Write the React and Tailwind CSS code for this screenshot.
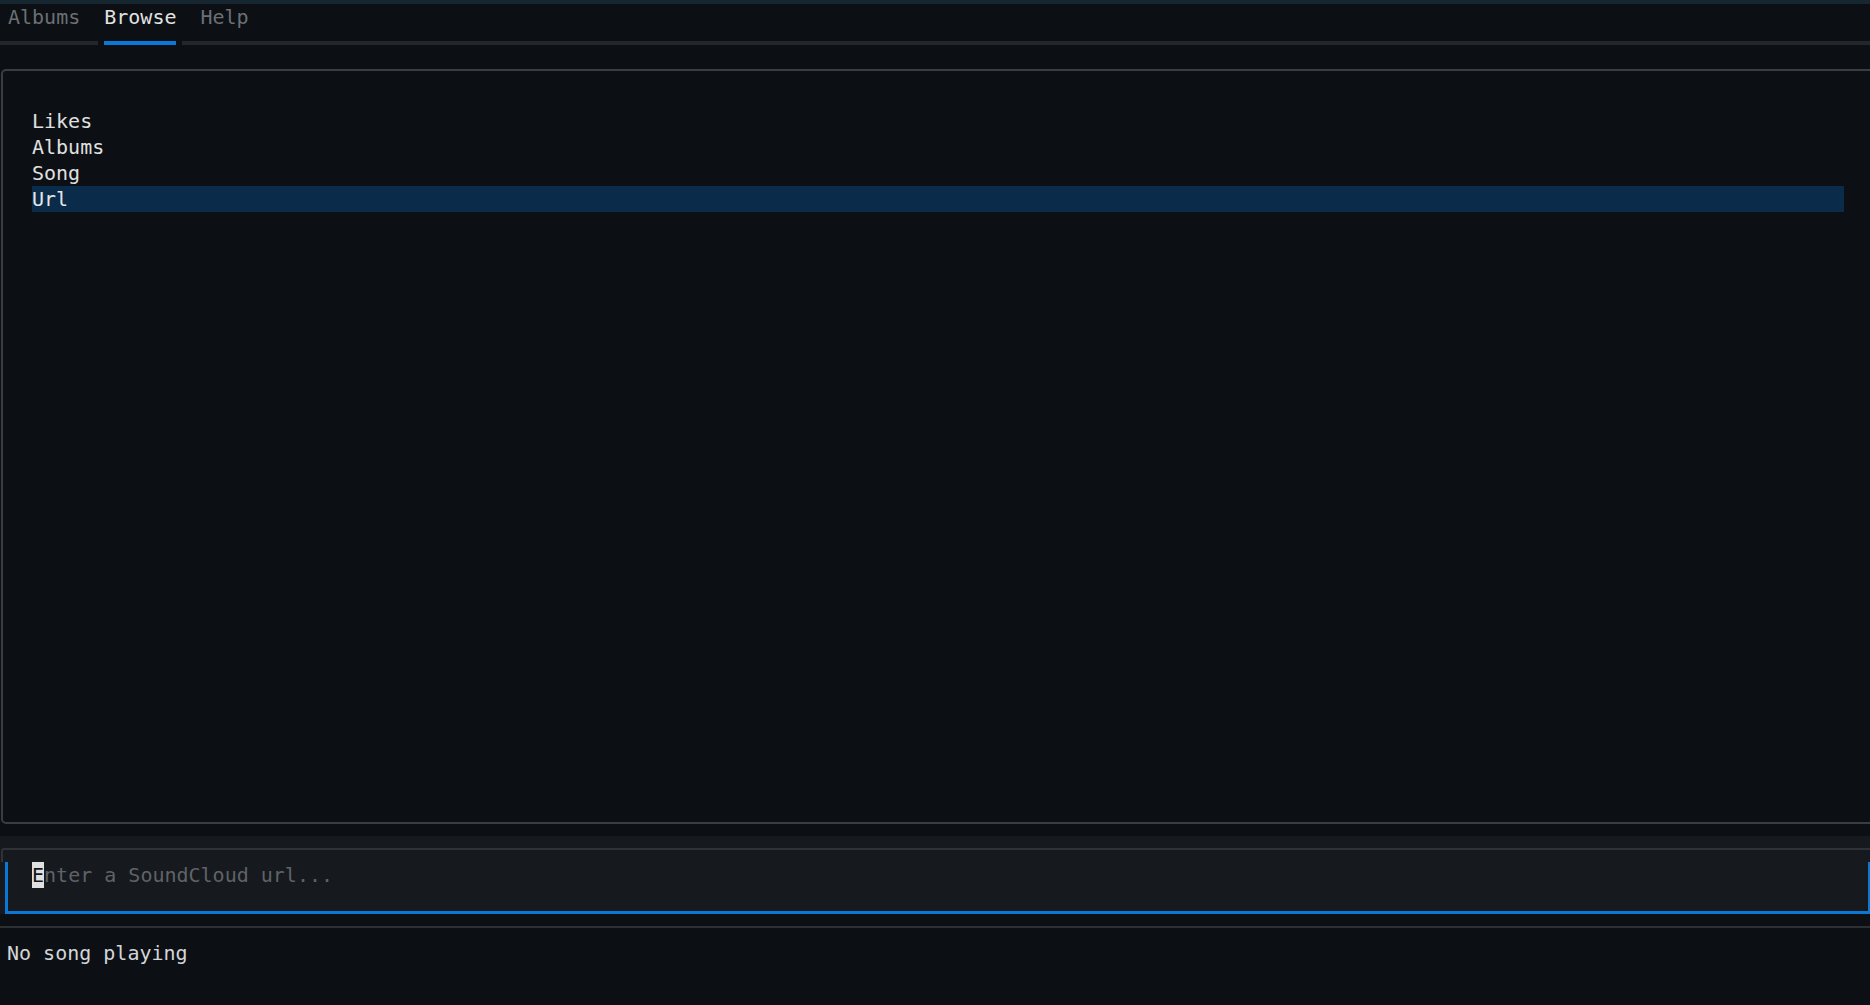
const items = ["Likes", "Albums", "Song", "Url"];

const App = () => {
    const selected = 3;

    return (
        <div
            className="w-[1870px] h-[1005px] overflow-hidden bg-[#0c0f13] text-[20px] leading-[26px] text-[#e0e0e0]"
            style={{ fontFamily: '"DejaVu Sans Mono", "Liberation Mono", monospace' }}
        >
            {/* top strip */}
            <div className="h-[4px] bg-[#172731]" />

            {/* tabs */}
            <div className="h-[26px] flex gap-[24px] pl-[8px] whitespace-pre">
                <span className="text-[#6b6f74]">Albums</span>
                <span className="text-[#e2e2e2]">Browse</span>
                <span className="text-[#6b6f74]">Help</span>
            </div>
            <div className="h-[26px] flex items-center">
                <div className="w-[98px] h-[4px] bg-[#23272c]" />
                <div className="w-[72px] h-[4px] ml-[6px] bg-[#0a78d4]" />
                <div className="flex-1 h-[4px] ml-[6px] bg-[#23272c]" />
            </div>

            {/* browse panel */}
            <div className="mt-[13px] ml-[1px] w-[1890px] h-[755px] border-2 border-[#3a3e44] rounded-[5px] pt-[37px] pl-[29px]">
                <div className="w-[1812px] flex flex-col">
                    {items.map((item, i) => (
                        <div
                            key={item}
                            className={i === selected ? "h-[26px] bg-[#0a2b4a] text-[#e6e6e6]" : "h-[26px] text-[#e0e0e0]"}
                        >
                            {item}
                        </div>
                    ))}
                </div>
            </div>

            {/* url input */}
            <div className="mt-[12px] h-[78px] bg-[#16191d]">
                <div className="h-[12px]" />
                <div className="ml-[1px] h-[14px] border-t-2 border-l-2 border-[#2f3338] rounded-tl-[3px]" />
                <div className="ml-[5px] w-[1865px] h-[52px] border-l-[3px] border-b-[3px] border-r-[2px] border-[#0a78d4] pl-[24px] whitespace-pre text-[#5f6368]">
                    <span className="inline-block h-[26px] bg-[#e0e0e0] text-[#111418]">E</span>
                    nter a SoundCloud url...
                </div>
            </div>

            {/* status */}
            <div className="mt-[12px] h-[2px] bg-[#2c3035]" />
            <div className="mt-[12px] h-[26px] pl-[7px] text-[#d2d6da] whitespace-pre">No song playing</div>
        </div>
    );
};

export default App;
